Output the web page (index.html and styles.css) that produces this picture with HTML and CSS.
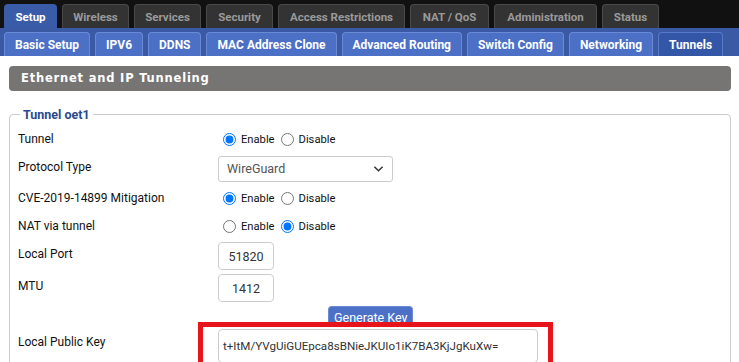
FILE: index.html
```html
<!DOCTYPE html>
<html lang="en">
<head>
  <meta charset="UTF-8">
  <title>Setup | Tunnels</title>
  <link rel="stylesheet" href="styles.css">
</head>
<body>
  <div class="topnav">
    <a class="tab active">Setup</a>
    <a class="tab">Wireless</a>
    <a class="tab">Services</a>
    <a class="tab">Security</a>
    <a class="tab">Access Restrictions</a>
    <a class="tab">NAT / QoS</a>
    <a class="tab">Administration</a>
    <a class="tab">Status</a>
  </div>
  <div class="subnav">
    <a class="subtab">Basic Setup</a>
    <a class="subtab">IPV6</a>
    <a class="subtab">DDNS</a>
    <a class="subtab">MAC Address Clone</a>
    <a class="subtab">Advanced Routing</a>
    <a class="subtab">Switch Config</a>
    <a class="subtab">Networking</a>
    <a class="subtab active">Tunnels</a>
  </div>
  <div class="main">
    <h2 class="section-title">Ethernet and IP Tunneling</h2>
    <fieldset class="tunnel">
      <legend>Tunnel oet1</legend>
      <div class="row radio-row">
        <div class="label">Tunnel</div>
        <div class="ctrl">
          <label><input type="radio" name="t1" checked>Enable</label>
          <label><input type="radio" name="t1">Disable</label>
        </div>
      </div>
      <div class="row select-row">
        <div class="label">Protocol Type</div>
        <div class="ctrl">
          <div class="select">WireGuard
            <svg viewBox="0 0 12 8" width="11" height="8"><path d="M1.5 1.5 6 6l4.5-4.5" fill="none" stroke="#333" stroke-width="1.6"/></svg>
          </div>
        </div>
      </div>
      <div class="row radio-row">
        <div class="label">CVE-2019-14899 Mitigation</div>
        <div class="ctrl">
          <label><input type="radio" name="t2" checked>Enable</label>
          <label><input type="radio" name="t2">Disable</label>
        </div>
      </div>
      <div class="row radio-row">
        <div class="label">NAT via tunnel</div>
        <div class="ctrl">
          <label><input type="radio" name="t3">Enable</label>
          <label><input type="radio" name="t3" checked>Disable</label>
        </div>
      </div>
      <div class="row input-row">
        <div class="label">Local Port</div>
        <div class="ctrl"><input class="num" type="text" value="51820"></div>
      </div>
      <div class="row input-row">
        <div class="label">MTU</div>
        <div class="ctrl"><input class="num" type="text" value="1412"></div>
      </div>
      <div class="btn-row">
        <button class="gen-btn">Generate Key</button>
      </div>
      <div class="row key-row">
        <div class="label">Local Public Key</div>
        <div class="ctrl">
          <div class="key-wrap">
            <input class="key" type="text" value="t+ItM/YVgUiGUEpca8sBNieJKUIo1iK7BA3KjJgKuXw=">
            <div class="highlight"></div>
          </div>
        </div>
      </div>
    </fieldset>
  </div>
</body>
</html>
```

FILE: styles.css
```css
html, body {margin: 0;padding: 0;background: #fff;font-family: Roboto, "Liberation Sans", sans-serif;font-size: 12px;color: #111;overflow: hidden;}
.topnav {background: #111;height: 28px;display: flex;align-items: flex-end;gap: 5px;padding-left: 4px;}
.tab {height: 24px;box-sizing: border-box;padding: 0;display: flex;align-items: center;justify-content: center;flex: none;background: #333;border: 1px solid #4a4a4a;border-bottom: none;border-radius: 4px 4px 0 0;color: #9a9a9a;font-weight: bold;font-size: 11.5px;white-space: nowrap;}
.tab:nth-child(1) {width: 53px;}
.tab:nth-child(2), .tab:nth-child(3), .tab:nth-child(4) {width: 67px;}
.tab:nth-child(5) {width: 127px;}
.tab:nth-child(6) {width: 79px;}
.tab:nth-child(7) {width: 103px;}
.tab:nth-child(8) {width: 57px;}
.tab.active {background: #3a5ca8;border-color: #3a5ca8;color: #fff;}
.subnav {background: #3a5aa6;height: 28px;display: flex;align-items: flex-end;gap: 5px;padding-left: 4px;}
.subtab {height: 24px;box-sizing: border-box;padding: 0 10px;display: flex;align-items: center;background: #4b70c6;border: 1px solid #6a8ad6;border-bottom: none;border-radius: 4px 4px 0 0;color: #fff;font-weight: bold;white-space: nowrap;}
.subtab.active {background: #3356a6;border-color: #5878c8;}
.main {padding: 10px 8px 0 9px;}
.section-title {margin: 0;height: 25px;line-height: 25px;background: #767574;border-radius: 4px;color: #fff;font-family: "DejaVu Sans", sans-serif;font-size: 11.5px;font-weight: bold;letter-spacing: 0.8px;padding-left: 12px;}
.tunnel {margin: 16px 0 0;border: 1px solid #ccc;border-radius: 4px;padding: 3px 8px 0;min-width: 0;}
.tunnel legend {color: #2b4a8c;font-weight: bold;padding: 0 3px;margin-left: 2px;font-size: 12.5px;}
.row {display: flex;align-items: center;}
.label {width: 200px;flex: none;}
.ctrl {display: flex;align-items: center;}
.radio-row {height: 28px;}
.radio-row label {margin-right: 1px;display: flex;align-items: center;font-size: 11.2px;}
.radio-row input {margin: 0 5px 0 5px;accent-color: #0075ff;}
.select-row {height: 31px;}
.select-row .label {margin-top: -3px;}
.select {width: 175px;height: 26px;box-sizing: border-box;border: 1px solid #ccc;border-radius: 3px;display: flex;align-items: center;justify-content: space-between;padding: 0 8px 0 8px;color: #555;font-size: 12.5px;}
.input-row {height: 32px;}
.input-row .label {margin-top: -5px;}
.num {width: 56px;height: 28px;box-sizing: border-box;border: 1px solid #ccc;border-radius: 4px;text-align: center;font-family: inherit;font-size: 12.5px;color: #333;padding: 0;}
.btn-row {padding: 2px 0 0 310px;height: 21px;display: flex;}
.gen-btn {height: 21px;padding: 0 5px;background: #4b70c6;border: 1px solid #6a8ad6;border-bottom: none;border-radius: 4px 4px 0 0;color: #fff;font-family: inherit;font-size: 12.5px;}
.key-row {height: 40px;align-items: flex-start;padding-top: 2px;}
.key-row .label {padding-top: 6px;}
.key-wrap {position: relative;}
.key {width: 320px;height: 34px;box-sizing: border-box;border: 1px solid #ccc;border-radius: 4px;font-family: inherit;font-size: 11.6px;color: #333;padding: 0 4px;}
.highlight {position: absolute;left: -20px;top: -7px;width: 355px;height: 50px;box-sizing: border-box;border: 5px solid #e8141c;}
```
